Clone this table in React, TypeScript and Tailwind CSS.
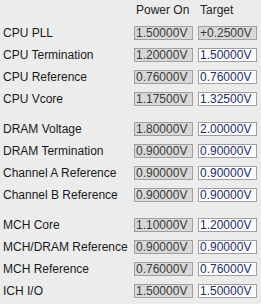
import React from "react";

type Row = { label: string; on: string; target: string; targetGray?: boolean };

const groups: Row[][] = [
  [
    { label: "CPU PLL", on: "1.50000V", target: "+0.2500V", targetGray: true },
    { label: "CPU Termination", on: "1.20000V", target: "1.50000V" },
    { label: "CPU Reference", on: "0.76000V", target: "0.76000V" },
    { label: "CPU Vcore", on: "1.17500V", target: "1.32500V" },
  ],
  [
    { label: "DRAM Voltage", on: "1.80000V", target: "2.00000V" },
    { label: "DRAM Termination", on: "0.90000V", target: "0.90000V" },
    { label: "Channel A Reference", on: "0.90000V", target: "0.90000V" },
    { label: "Channel B Reference", on: "0.90000V", target: "0.90000V" },
  ],
  [
    { label: "MCH Core", on: "1.10000V", target: "1.20000V" },
    { label: "MCH/DRAM Reference", on: "0.90000V", target: "0.90000V" },
    { label: "MCH Reference", on: "0.76000V", target: "0.76000V" },
    { label: "ICH I/O", on: "1.50000V", target: "1.50000V" },
  ],
];

export default function App() {
  return (
    <div
      className="w-[261px] h-[304px] bg-[#ececec] text-[12px] text-[#1a1a1a] overflow-hidden"
      style={{ fontFamily: '"Liberation Sans", Arial, sans-serif' }}
    >
      <div className="flex h-[14px] mt-[3px] leading-[14px] text-[#222]">
        <div className="flex-1" />
        <div className="w-[59px] pl-[2px]">Power On</div>
        <div className="w-[59px] ml-[5px] pl-[2px] mr-[4px]">Target</div>
      </div>
      <div className="mt-[9px] flex flex-col gap-[16px]">
        {groups.map((g, gi) => (
          <div key={gi} className="flex flex-col gap-[8px]">
            {g.map((r) => (
              <div key={r.label} className="flex items-center h-[14px]">
                <div className="flex-1 pl-[3px] leading-[14px] whitespace-nowrap">{r.label}</div>
                <div className="w-[59px] h-[14px] border border-[#a0a0a0] bg-[#d8d8d8] pl-[1px] leading-[12px] text-[#3a3a3a] whitespace-nowrap">
                  {r.on}
                </div>
                <div
                  className={
                    r.targetGray
                      ? "w-[59px] h-[14px] ml-[5px] mr-[4px] border border-[#a0a0a0] bg-[#d8d8d8] pl-[1px] leading-[12px] text-[#3a3a3a] whitespace-nowrap"
                      : "w-[59px] h-[14px] ml-[5px] mr-[4px] border border-[#a0a0a0] bg-white pl-[1px] leading-[12px] text-[#1e2a78] whitespace-nowrap"
                  }
                >
                  {r.target}
                </div>
              </div>
            ))}
          </div>
        ))}
      </div>
    </div>
  );
}
